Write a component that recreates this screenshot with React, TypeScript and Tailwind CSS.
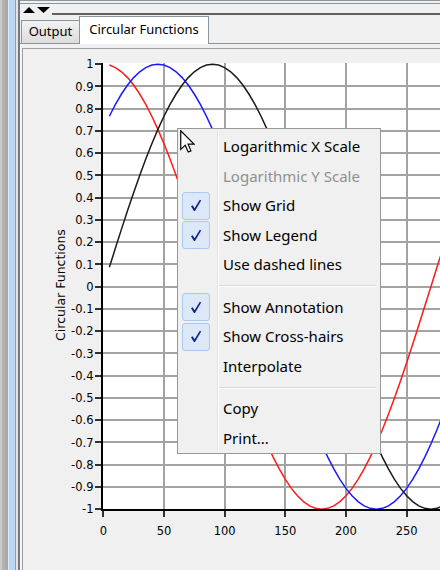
import React from "react";

const X = (u: number) => 103.3 + u * 1.2133;
const Y = (v: number) => 286.7 - v * 222.5;

function curve(f: (u: number) => number) {
  const pts: string[] = [];
  for (let u = 5; u <= 290; u += 5) {
    pts.push(`${X(u).toFixed(2)},${Y(f(u)).toFixed(2)}`);
  }
  return pts.join(" ");
}

const rad = (d: number) => (d * Math.PI) / 180;

function Chart() {
  const yTicks: number[] = [];
  for (let i = 10; i >= -10; i--) yTicks.push(i / 10);
  const xTicks = [0, 50, 100, 150, 200, 250];
  const fmt = (v: number) => {
    if (v === 1) return "1";
    if (v === -1) return "-1";
    if (v === 0) return "0";
    return v.toFixed(1);
  };
  return (
    <svg
      width={417}
      height={521}
      viewBox="23 49 417 521"
      className="block"
      style={{ fontFamily: '"DejaVu Sans", sans-serif' }}
    >
      <rect x={103} y={63} width={340} height={447} fill="#ffffff" />
      {xTicks.slice(1).map((u) => (
        <line key={"gx" + u} x1={Math.round(X(u))} x2={Math.round(X(u))} y1={63} y2={509} stroke="#a3a3a3" strokeWidth={2} />
      ))}
      {yTicks.filter((v) => v < 0.99 && v > -0.99).map((v) => (
        <line key={"gy" + v} x1={103} x2={440} y1={Math.round(Y(v))} y2={Math.round(Y(v))} stroke="#a3a3a3" strokeWidth={2} />
      ))}
      <polyline points={curve((u) => Math.cos(rad(u)))} fill="none" stroke="#ff1a1a" strokeWidth={1.5} />
      <polyline points={curve((u) => Math.cos(rad(u - 45)))} fill="none" stroke="#1a1aff" strokeWidth={1.5} />
      <polyline points={curve((u) => Math.sin(rad(u)))} fill="none" stroke="#1a1a1a" strokeWidth={1.5} />
      {/* y axis */}
      <line x1={102} x2={102} y1={63} y2={511} stroke="#000" strokeWidth={2} />
      {yTicks.map((v) => (
        <g key={"ty" + v}>
          <line x1={95} x2={102} y1={Math.round(Y(v))} y2={Math.round(Y(v))} stroke="#000" strokeWidth={1.6} />
          <text x={93.5} y={Y(v) + 4.2} textAnchor="end" fontSize={11.5} fill="#000">
            {fmt(v)}
          </text>
        </g>
      ))}
      {/* x axis */}
      <line x1={101} x2={440} y1={510} y2={510} stroke="#000" strokeWidth={2} />
      {xTicks.map((u) => (
        <g key={"tx" + u}>
          <line x1={Math.round(X(u))} x2={Math.round(X(u))} y1={510} y2={517} stroke="#000" strokeWidth={1.6} />
          <text x={X(u)} y={534.5} textAnchor="middle" fontSize={11.5} fill="#000">
            {u}
          </text>
        </g>
      ))}
      <text x={65} y={285} transform="rotate(-90 65 285)" textAnchor="middle" fontSize={12.5} fill="#000">
        Circular Functions
      </text>
    </svg>
  );
}

function Check() {
  return (
    <div className="flex h-[28px] w-[28px] items-center justify-center rounded-[3px] border border-[#a9c9f0] bg-[#dce8f7]">
      <svg width="12" height="13" viewBox="0 0 12 13">
        <path d="M1 7.2 L2.6 6.2 L4.6 9.2 L9.8 0.8 L11.2 1.6 L5 12 L3.9 12 Z" fill="#14258a" />
      </svg>
    </div>
  );
}

type Item = { label: string; checked?: boolean; disabled?: boolean };

function MenuRow({ item }: { item: Item }) {
  return (
    <div className="flex h-[29.5px] items-center pl-[4px]">
      <div className="w-[28px] shrink-0">{item.checked ? <Check /> : null}</div>
      <span
        className={
          "ml-[13px] whitespace-nowrap text-[15px] leading-none " +
          (item.disabled ? "text-[#8f8f8f]" : "text-[#000000]")
        }
      >
        {item.label}
      </span>
    </div>
  );
}

function Sep() {
  return (
    <div className="flex h-[13px] flex-col justify-center pl-[41px] pr-[4px]">
      <div className="h-px bg-[#d7d7d7]" />
      <div className="h-px bg-[#ffffff]" />
    </div>
  );
}

function Menu() {
  const g1: Item[] = [
    { label: "Logarithmic X Scale" },
    { label: "Logarithmic Y Scale", disabled: true },
    { label: "Show Grid", checked: true },
    { label: "Show Legend", checked: true },
    { label: "Use dashed lines" },
  ];
  const g2: Item[] = [
    { label: "Show Annotation", checked: true },
    { label: "Show Cross-hairs", checked: true },
    { label: "Interpolate" },
  ];
  const g3: Item[] = [{ label: "Copy" }, { label: "Print..." }];
  return (
    <div
      className="absolute left-[177px] top-[128px] h-[326px] w-[204px] border border-[#979797] bg-[#f0f0f0] pt-[3px]"
      style={{ fontFamily: '"Noto Sans", "Open Sans", sans-serif' }}
    >
      <div className="absolute bottom-[2px] left-[39px] top-[2px] w-px bg-[#e2e3e3]" />
      <div className="absolute bottom-[2px] left-[40px] top-[2px] w-px bg-[#ffffff]" />
      <div className="relative">
        {g1.map((it) => (
          <MenuRow key={it.label} item={it} />
        ))}
        <Sep />
        {g2.map((it) => (
          <MenuRow key={it.label} item={it} />
        ))}
        <Sep />
        {g3.map((it) => (
          <MenuRow key={it.label} item={it} />
        ))}
      </div>
    </div>
  );
}

function Cursor() {
  return (
    <svg className="absolute left-[180px] top-[130px]" width="15" height="23" viewBox="0 0 12.6 19.4">
      <path
        d="M0.6 0.6 L0.6 16.4 L4.4 12.8 L6.9 18.6 L9.2 17.6 L6.8 11.9 L11.8 11.9 Z"
        fill="#ffffff"
        stroke="#000000"
        strokeWidth="1"
        strokeLinejoin="miter"
      />
    </svg>
  );
}

export default function App() {
  return (
    <div className="relative flex h-[570px] w-[440px] overflow-hidden bg-[#f0f0f0]">
      {/* window frame */}
      <div className="flex h-full shrink-0">
        <div className="w-[2px] bg-[#c9c9c9]" />
        <div className="w-[6px] bg-gradient-to-r from-[#b6b6b6] to-[#a5a5a5]" />
        <div className="w-px bg-[#dfe9f5]" />
        <div className="w-[6px] bg-[#b9d6f3]" />
        <div className="w-px bg-[#8e9db0]" />
        <div className="w-[2px] bg-[#e4e4e4]" />
        <div className="w-[2px] bg-[#76767e]" />
      </div>
      <div className="flex min-w-0 flex-1 flex-col">
        {/* splitter strip */}
        <div className="h-px shrink-0 bg-[#8c94a0]" />
        <div className="h-[2px] shrink-0" />
        <div className="h-px shrink-0 bg-[#8c94a0]" />
        <div className="flex h-[9px] shrink-0 items-end gap-[2px] pl-[3px]">
          <svg width="12" height="6" viewBox="0 0 12 6">
            <path d="M0 6 L6 0 L12 6 Z" fill="#000" />
          </svg>
          <svg width="13" height="6" viewBox="0 0 13 6">
            <path d="M0 0 L13 0 L6.5 6 Z" fill="#000" />
          </svg>
        </div>
        <div className="ml-[32px] h-[2px] shrink-0 bg-[#606060]" />
        {/* tab strip */}
        <div
          className="flex h-[29px] shrink-0 items-end border-b border-[#8c94a0]"
          style={{ fontFamily: '"Noto Sans", "Open Sans", sans-serif' }}
        >
          <div className="ml-px flex h-[23px] w-[58px] items-center justify-center border-l border-t border-[#8c94a0] bg-gradient-to-b from-[#f2f2f2] to-[#dcdcdc] text-[13px] text-[#000]">
            Output
          </div>
          <div className="relative z-10 -mb-px flex h-[28px] w-[130px] items-start justify-center border-l border-r border-t border-[#8c94a0] bg-[#ffffff] pt-[3px] text-[13px] text-[#000]">
            Circular Functions
          </div>
        </div>
        {/* panel */}
        <div className="flex min-h-0 flex-1 flex-col border-l border-[#fafafa] pl-px pt-[4px]">
          <div className="flex-1 overflow-hidden border-l border-t border-[#a0a0a0] bg-[#f0f0f0]">
            <Chart />
          </div>
        </div>
      </div>
      <Menu />
      <Cursor />
    </div>
  );
}
